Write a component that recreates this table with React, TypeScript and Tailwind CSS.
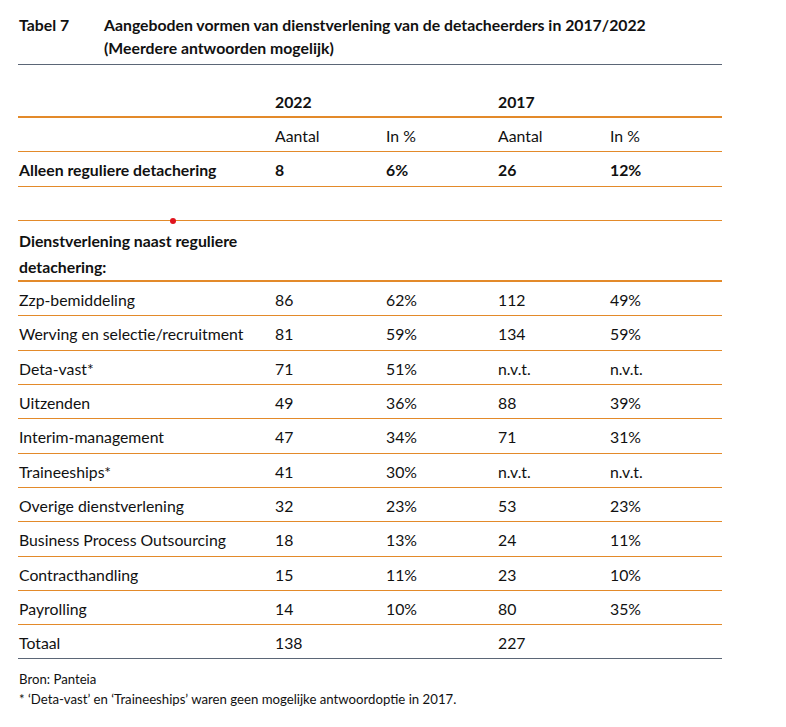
import React from "react";

const rows: [string, string, string, string, string][] = [
  ["Zzp-bemiddeling", "86", "62%", "112", "49%"],
  ["Werving en selectie/recruitment", "81", "59%", "134", "59%"],
  ["Deta-vast*", "71", "51%", "n.v.t.", "n.v.t."],
  ["Uitzenden", "49", "36%", "88", "39%"],
  ["Interim-management", "47", "34%", "71", "31%"],
  ["Traineeships*", "41", "30%", "n.v.t.", "n.v.t."],
  ["Overige dienstverlening", "32", "23%", "53", "23%"],
  ["Business Process Outsourcing", "18", "13%", "24", "11%"],
  ["Contracthandling", "15", "11%", "23", "10%"],
  ["Payrolling", "14", "10%", "80", "35%"],
];

const grid = "grid grid-cols-[256px_111px_112px_112px_1fr] items-center";

export default function App() {
  return (
    <div
      className="w-[786px] h-[727px] bg-white text-[#111] pl-[18px] pt-[13px]"
      style={{ fontFamily: "Lato, 'Open Sans', sans-serif" }}
    >
      <div className="w-[704px] text-[15.8px]">
        <div className="flex font-bold leading-[23px] pl-[1px] pb-[5px]">
          <div className="w-[85px]">Tabel 7</div>
          <div>
            <div>Aangeboden vormen van dienstverlening van de detacheerders in 2017/2022</div>
            <div>(Meerdere antwoorden mogelijk)</div>
          </div>
        </div>
        <div className="border-t border-[#5b6676]" />
        <div className={`${grid} h-[53px] border-b-2 border-[#e38a2a] font-bold pt-[23px]`}>
          <div />
          <div className="pl-[1px]">2022</div>
          <div />
          <div className="pl-[1px]">2017</div>
          <div />
        </div>
        <div className={`${grid} h-[34px] border-b border-[#e38a2a] pt-[2px]`}>
          <div />
          <div className="pl-[1px]">Aantal</div>
          <div className="pl-[1px]">In %</div>
          <div className="pl-[1px]">Aantal</div>
          <div className="pl-[1px]">In %</div>
        </div>
        <div className={`${grid} h-[35px] border-b border-[#e38a2a] font-bold pt-[2px]`}>
          <div className="pl-[1px]">Alleen reguliere detachering</div>
          <div className="pl-[1px]">8</div>
          <div className="pl-[1px]">6%</div>
          <div className="pl-[1px]">26</div>
          <div className="pl-[1px]">12%</div>
        </div>
        <div className="relative h-[34px] border-b border-[#e38a2a]">
          <div className="absolute left-[152px] bottom-[-3.5px] w-[6px] h-[6px] rounded-full bg-[#e0141e]" />
        </div>
        <div className="h-[61px] border-b-2 border-[#e38a2a] font-bold leading-[26px] pl-[1px] pt-[7px]">
          <div>Dienstverlening naast reguliere</div>
          <div>detachering:</div>
        </div>
        {rows.map((r) => (
          <div key={r[0]} className={`${grid} h-[34.35px] border-b border-[#e38a2a] pt-[2px]`}>
            {r.map((c, i) => (
              <div key={i} className="pl-[1px] whitespace-nowrap">
                {c}
              </div>
            ))}
          </div>
        ))}
        <div className={`${grid} h-[34px] border-b border-[#5b6676] pt-[2px]`}>
          <div className="pl-[1px]">Totaal</div>
          <div className="pl-[1px]">138</div>
          <div />
          <div className="pl-[1px]">227</div>
          <div />
        </div>
        <div className="text-[13.2px] leading-[20px] pl-[1px] pt-[10px]">
          <div>Bron: Panteia</div>
          <div>* ‘Deta-vast’ en ‘Traineeships’ waren geen mogelijke antwoordoptie in 2017.</div>
        </div>
      </div>
    </div>
  );
}
